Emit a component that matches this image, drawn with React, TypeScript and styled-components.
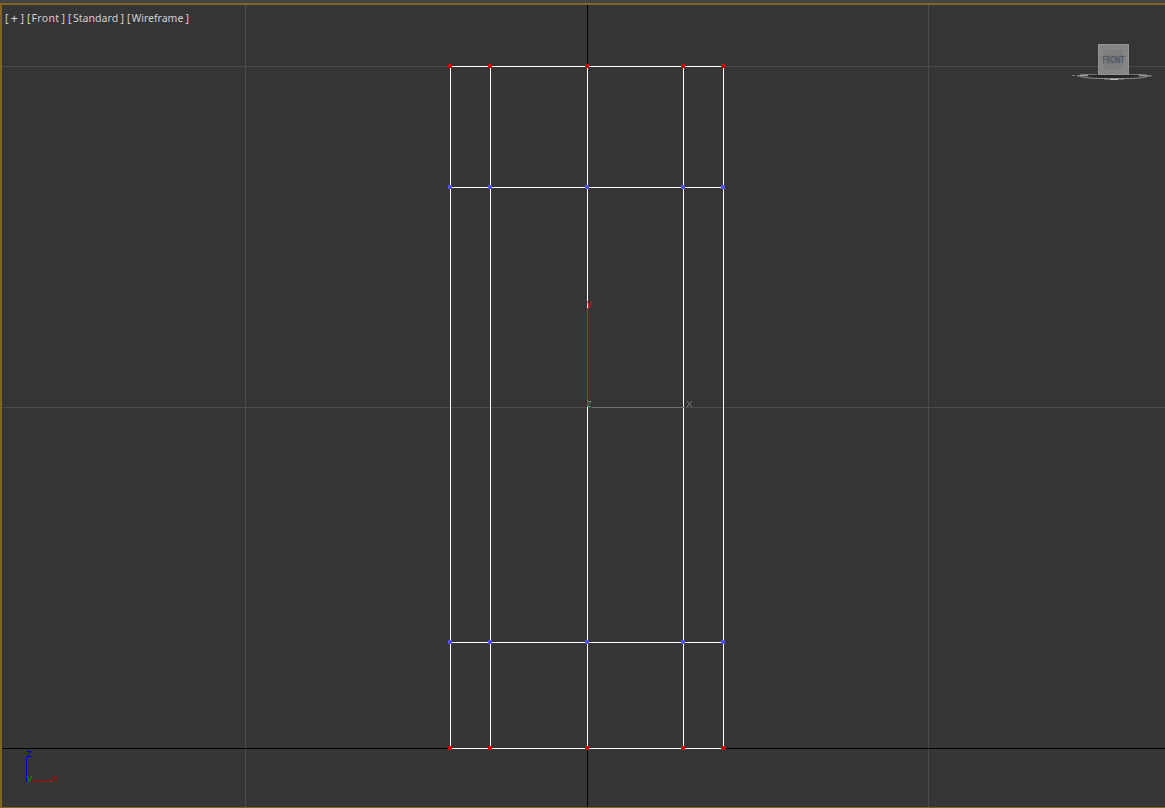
import React from 'react';
import styled, { createGlobalStyle } from 'styled-components';

const GlobalStyle = createGlobalStyle`
  * { box-sizing: border-box; }
  body { margin: 0; background: #444444; overflow: hidden; }
`;

const Frame = styled.main`
  width: 1165px;
  height: 808px;
  padding-top: 3px;
  background: #444444;
`;

const Viewport = styled.section`
  position: relative;
  height: 805px;
  border: solid #806622;
  border-width: 2px 0 1px 2px;
  background: #353535;
  overflow: hidden;
`;

const Scene = styled.svg`
  display: block;
  width: 1163px;
  height: 802px;
  font-family: 'DejaVu Sans', sans-serif;
`;

const LabelBar = styled.nav`
  position: absolute;
  top: 6px;
  left: 3px;
  display: flex;
  font: 10.5px/14px 'Noto Sans', sans-serif;
  color: #d0d0d0;
`;

const LabelItem = styled.span<{ $width: number }>`
  display: flex;
  width: ${(p) => p.$width}px;
  padding-right: 3px;
  white-space: nowrap;
`;

const LabelText = styled.span<{ $size: number; $spacing: number; $indent: number }>`
  margin: 0 auto 0 ${(p) => p.$indent}px;
  font-size: ${(p) => p.$size}px;
  letter-spacing: ${(p) => p.$spacing}px;
`;

const labels = [
  { text: '+', width: 22, size: 13, spacing: 0, indent: 2 },
  { text: 'Front', width: 41, size: 10.5, spacing: 0.35, indent: 1 },
  { text: 'Standard', width: 59, size: 10.5, spacing: 0.05, indent: 1.5 },
  { text: 'Wireframe', width: 65, size: 10.5, spacing: 0, indent: 1 },
];

const columns = [450, 490, 587, 683, 723];
const rows = [
  { y: 66, color: '#d60000' },
  { y: 187, color: '#5252f2' },
  { y: 642, color: '#5252f2' },
  { y: 748, color: '#d60000' },
];

const Grid = () => (
  <g fill="#4b4b4b">
    {[245, 928].map((x) => <rect key={x} x={x} y="5" width="1" height="802" />)}
    {[66, 407].map((y) => <rect key={y} x="2" y={y} width="1163" height="1" />)}
    <rect x="2" y="748" width="1163" height="1" fill="#000" />
    <rect x="587" y="5" width="1" height="802" fill="#000" />
  </g>
);

const Mesh = () => (
  <g shapeRendering="crispEdges">
    {columns.map((x) => <rect key={x} x={x} y="66" width="1" height="683" fill="#fff" />)}
    {rows.map(({ y }) => <rect key={y} x="450" y={y} width="274" height="1" fill="#fff" />)}
    {rows.map(({ y, color }) =>
      columns.map((x) => (
        <rect key={`${x}-${y}`} x={x - 2} y={y - 2} width="4" height="4" fill={color} />
      )),
    )}
  </g>
);

const Gizmo = () => (
  <g>
    <rect x="587" y="308" width="1" height="99" fill="#dc1c1c" />
    <rect x="592" y="407" width="92" height="1" fill="#707070" />
    <g fill="none" strokeWidth="1">
      <path d="M587.500 301l1.500 6M591.500 301l-2 6-1.500 2" stroke="#d02020" />
      <path d="M587 401.500h4l-4 5h4" stroke="#777" />
      <path d="M687 401l5 6M692 401l-5 6" stroke="#777" />
    </g>
  </g>
);

const WorldAxis = () => (
  <g fill="none" strokeWidth="1">
    <rect x="26" y="757" width="1" height="25" fill="#0000dc" />
    <rect x="31" y="781" width="22" height="1" fill="#b00000" />
    <path d="M27 751.500h4l-4 5h5" stroke="#0000d8" />
    <path d="M27.500 776l2 5M32 776l-2.500 5-2 2" stroke="#009900" />
    <path d="M52.500 775.500l5 5.500M57.500 775.500l-5 5.500" stroke="#c00000" />
  </g>
);

const ViewCube = () => (
  <g>
    <path d="M1072 75.500h3M1077 76l5-1.500h15M1129 74.500h12l11 1.500" stroke="#777" fill="none" />
    <path d="M1077 75.500q9 3 20 3h33q13 0 21-3" stroke="#85888b" strokeWidth="1.200" fill="none" />
    <path d="M1080 75.500h8M1139 75.500h8" stroke="#999da1" strokeWidth="1.500" fill="none" />
    <path d="M1088 75h50l-4 2-18 1h-9l-18-2z" fill="#252525" />
    <path d="M1104 79h20" stroke="#999" />
    <path d="M1110 79.500h8" stroke="#bbb" />
    <rect x="1098" y="44" width="31" height="31" fill="#858585" />
    <rect x="1098.500" y="44.500" width="30" height="30" stroke="#939393" fill="none" />
    <rect x="1104" y="50" width="19" height="19" fill="#7c7e80" />
    <text x="1102.500" y="63" fontSize="8.800" textLength="22" lengthAdjust="spacingAndGlyphs" fill="#505860" stroke="#505860" strokeWidth=".4">FRONT</text>
  </g>
);

export default function App() {
  return (
    <>
      <GlobalStyle />
      <Frame>
        <Viewport>
          <Scene viewBox="2 5 1163 802">
            <Grid />
            <Mesh />
            <Gizmo />
            <WorldAxis />
            <ViewCube />
          </Scene>
          <LabelBar>
            {labels.map(({ text, width, size, spacing, indent }) => (
              <LabelItem key={text} $width={width}>
                <span>[</span>
                <LabelText $size={size} $spacing={spacing} $indent={indent}>{text}</LabelText>
                <span>]</span>
              </LabelItem>
            ))}
          </LabelBar>
        </Viewport>
      </Frame>
    </>
  );
}
